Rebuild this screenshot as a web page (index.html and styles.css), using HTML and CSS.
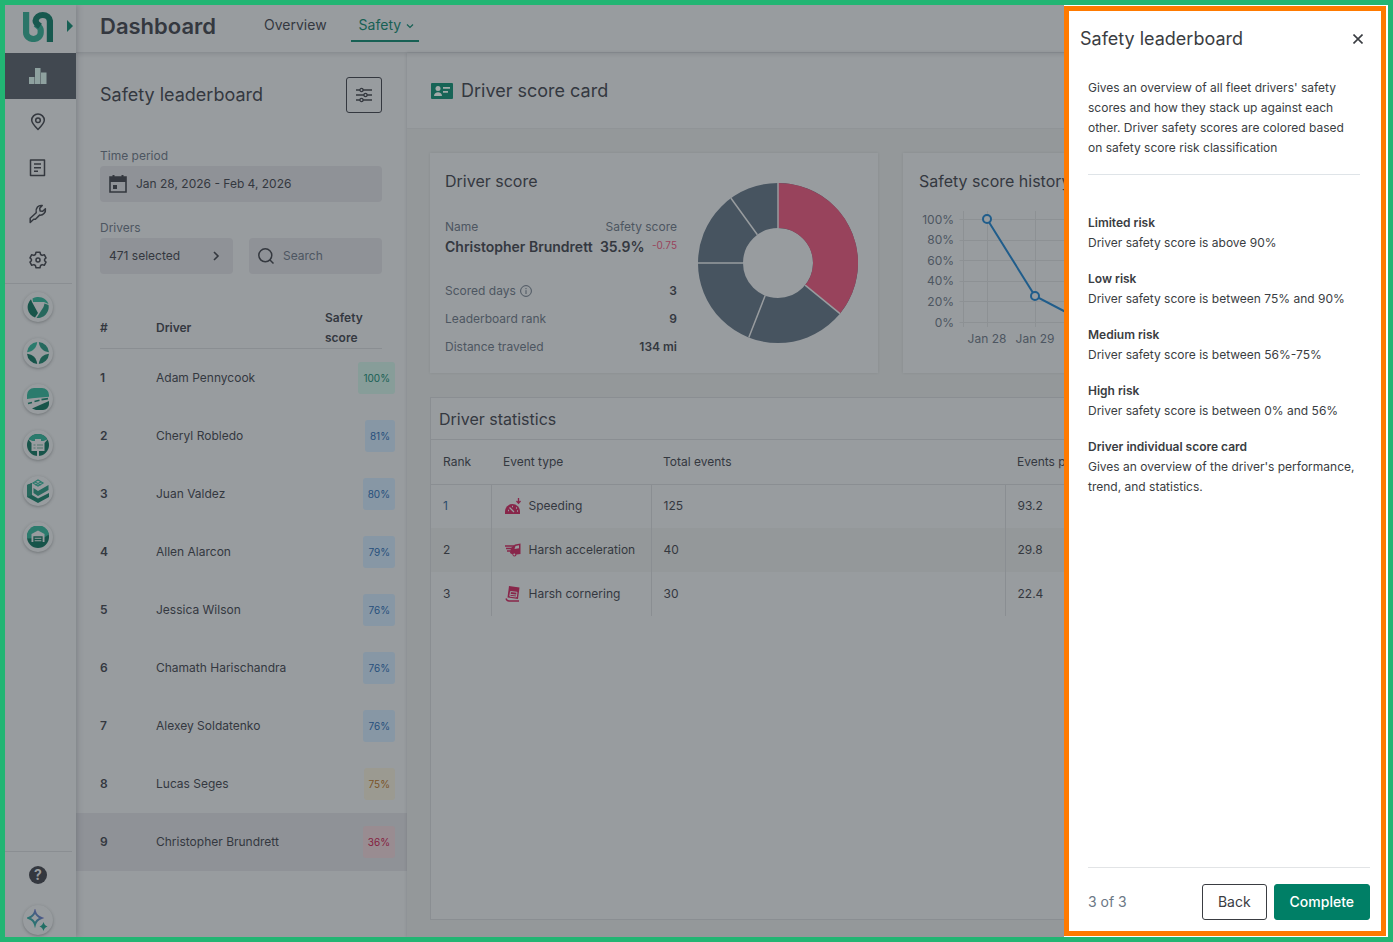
FILE: index.html
```
<!DOCTYPE html>
<html lang="en">

<head>
    <meta charset="UTF-8">
    <meta name="viewport" content="width=device-width, initial-scale=1.0">
    <title>Dashboard - Safety</title>
    <link rel="stylesheet" href="styles.css">
</head>

<body>
    <div class="app">
        <nav class="sidebar" aria-label="Main">
            <div class="brand">
                <svg width="30" height="31" viewBox="0 0 30 31" fill="none" stroke-width="6.200">
                    <path d="M3.100 1v20.500a7.300 6.500 0 0 0 14.600 0V19c0-2.500-2-3.500-5-6" stroke="#2b7568" />
                    <path d="M26.900 31V9.800a7.200 6.600 0 0 0-14.300 0c0 2.500 2.400 4 4.400 5.500" stroke="#17594f" />
                </svg>
                <svg class="brand-arrow" width="6" height="12" viewBox="0 0 6 12"><path d="M0 0l6 6-6 6z" fill="#176054" /></svg>
            </div>
            <a class="nav-item active" href="#" aria-label="Dashboard">
                <svg width="18" height="16" viewBox="0 0 18 16" fill="#8ea19f"><path d="M0 9h5.500v7H0zM6 0h5.500v16H6zM12 4.500h5.500V16H12z" /></svg>
            </a>
            <a class="nav-item" href="#" aria-label="Map">
                <svg width="16" height="18" viewBox="0 0 16 18" class="line"><path d="M8 16.500C4 12.500 1.700 10 1.700 7.300a6.300 6.300 0 0 1 12.600 0c0 2.700-2.300 5.200-6.300 9.200z" /><circle cx="8" cy="7.300" r="2.300" /></svg>
            </a>
            <a class="nav-item" href="#" aria-label="Reports">
                <svg width="18" height="18" viewBox="0 0 18 18" class="line"><path d="M1.500 1h14v15.500h-14zM5 5h7M5 8.700h7M5 12.300h4" /></svg>
            </a>
            <a class="nav-item" href="#" aria-label="Maintenance">
                <svg width="18" height="20" viewBox="0 0 18 20" class="line"><path d="M1.200 18.500v-4.200l6-5.600C6.300 4 9.500.8 13.200 1.500l-2.500 2.800.4 2.600 2.600.4 2.700-2.500c.7 3.700-2.500 6.700-5.800 6.300l-4.200 4.200H4.700z" /></svg>
            </a>
            <a class="nav-item" href="#" aria-label="Settings">
                <svg width="18" height="18" viewBox="0 0 18 18" class="line"><path d="M7 1.200h4l.6 2.300 1.500.9 2.200-.7 1.700 3.200-1.400 1.400v1.500l1.400 1.300-1.700 3.200-2.200-.7-1.500.9-.6 2.300H7l-.6-2.300-1.500-.9-2.200.7L1 11.100l1.400-1.300V8.300L1 6.900l1.700-3.200 2.200.7 1.500-.9z" /><circle cx="9" cy="9" r="2" /></svg>
            </a>
            <div class="app-links">
                <a class="round" href="#" aria-label="Telematics">
                    <svg width="22" height="22" viewBox="0 0 22 22"><path d="M5.500 2.500A11 11 0 0 1 21.500 8L17 6H6z" fill="#2b7b6d" /><path d="M4 3.200A11 11 0 0 0 8 21.500l3-4.500L5 6z" fill="#17544a" /><path d="M17.500 7.500l4 1.500A11 11 0 0 1 9.500 22l7-11z" fill="#26685d" /></svg>
                </a>
                <a class="round" href="#" aria-label="Navigation">
                    <svg width="22" height="22" viewBox="0 0 22 22"><path d="M10.200 0A11 11 0 0 0 0 10.200C6 9.500 9.500 6 10.200 0z" fill="#2b7b6d" /><path d="M11.800 0A11 11 0 0 1 22 10.200C16 9.500 12.500 6 11.800 0z" fill="#26695e" /><path d="M10.200 22A11 11 0 0 1 0 11.800C6 12.500 9.500 16 10.200 22z" fill="#17544a" /><path d="M11.800 22A11 11 0 0 0 22 11.800C16 12.500 12.500 16 11.800 22z" fill="#205e53" /></svg>
                </a>
                <a class="round" href="#" aria-label="Routes">
                    <svg width="22" height="22" viewBox="0 0 22 22"><path d="M0 11V7a7 7 0 0 1 7-7h8a7 7 0 0 1 7 7v1.800C14 9.500 7 10 0 11z" fill="#2b7b6d" /><path d="M1 15.500l4-1M7.500 13.500l5-1.200M14.500 11.600l6.500-1" stroke="#1c5e53" stroke-width="1.600" /><path d="M5 20.500L22 13v3a6 6 0 0 1-6 6H9z" fill="#17544a" /></svg>
                </a>
                <a class="round" href="#" aria-label="Tasks">
                    <svg width="22" height="22" viewBox="0 0 22 22"><circle cx="11" cy="11" r="11" fill="#17544a" /><path d="M1.800 5a11 11 0 0 1 18.400 0l-3 2H5z" fill="#2b7b6d" /><path d="M1 5l4.500 2H8V5h6v2h2.500L21 5l-3.500 4v8H12v5h-2v-5H4.500V9z" fill="#989c9f" /><path d="M6.500 11h2M10 11h6M6.500 14h2M10 14h6" stroke="#50766f" stroke-width="1.200" /></svg>
                </a>
                <a class="round" href="#" aria-label="Inventory">
                    <svg width="22" height="24" viewBox="0 0 22 24"><path d="M0 6l5-2v12l6 3.500L22 14v4l-11 6-11-6z" fill="#1c5c51" /><path d="M0 6l5-2v12l-5 2z" fill="#28685d" /><path d="M6.500 9l4.500 3L21.500 6v5L11 17l-4.500-3z" fill="#27695e" /><path d="M6 4l5-3 5 3-5 3zM8 3l6 3M8 6l6-3" fill="none" stroke="#2b7b6d" stroke-width="1.200" /></svg>
                </a>
                <a class="round" href="#" aria-label="Warehouse">
                    <svg width="22" height="22" viewBox="0 0 22 22"><circle cx="11" cy="11" r="11" fill="#17544a" /><path d="M0 12.500a11 11 0 0 1 22-4l-5.500 3.500z" fill="#2b7b6d" /><path d="M4.500 16V8L11 4.500 17.500 8v8z" fill="#989c9f" /><path d="M7 17v-6h8v6M7 13.500h8M7 16h8" fill="none" stroke="#17544a" stroke-width="1.300" /></svg>
                </a>
            </div>
            <div class="sidebar-bottom">
                <a class="help" href="#" aria-label="Help">?</a>
                <a class="round" href="#" aria-label="Assistant">
                    <svg width="22" height="22" viewBox="0 0 22 22">
                        <defs><linearGradient id="spark" x1="0" y1="1" x2="1" y2="0"><stop offset="0.200" stop-color="#26766f" /><stop offset="1" stop-color="#5a4d91" /></linearGradient></defs>
                        <path d="M8 2.500c1 3.500 2.500 5 6.500 6.500-4 1.500-5.500 3-6.500 6.500C7 12 5.500 10.500 1.500 9 5.500 7.500 7 6 8 2.500z" fill="none" stroke="url(#spark)" stroke-width="2" />
                        <path d="M16.500 13c.7 2.500 1.500 3.300 4 4.500-2.500 1.200-3.300 2-4 4.500-.7-2.500-1.500-3.300-4-4.500 2.500-1.200 3.300-2 4-4.500z" fill="#216f65" />
                    </svg>
                </a>
            </div>
        </nav>

        <div class="page">
            <header class="topbar">
                <h1>Dashboard</h1>
                <a class="tab" href="#">Overview</a>
                <a class="tab selected" href="#">Safety
                    <svg width="8" height="6" viewBox="0 0 8 6" fill="none" stroke="currentColor" stroke-width="1.200"><path d="M1 1.500l3 3 3-3" /></svg>
                </a>
            </header>

            <div class="columns">
                <section class="leaderboard">
                    <div class="filters">
                        <div class="filters-head">
                            <h2>Safety leaderboard</h2>
                            <button class="filter-button" type="button" aria-label="Filters">
                                <svg width="16" height="16" viewBox="0 0 16 16" fill="none" stroke="currentColor" stroke-width="1.300"><path d="M0 3h4M7 3h9M0 8h8M11 8h5M0 13h4M7 13h9" /><circle cx="5.500" cy="3" r="1.600" /><circle cx="9.500" cy="8" r="1.600" /><circle cx="5.500" cy="13" r="1.600" /></svg>
                            </button>
                        </div>
                        <label class="field-label" for="period">Time period</label>
                        <button class="field" id="period" type="button">
                            <svg width="18" height="18" viewBox="0 0 18 18"><path d="M1 2h16v15H1z" fill="none" stroke="currentColor" stroke-width="1.600" /><path d="M1 2h16v5H1zM3.500 0h2v3h-2zM12.500 0h2v3h-2zM4 10h4v4H4z" fill="currentColor" /></svg>
                            <span>Jan 28, 2026 - Feb 4, 2026</span>
                        </button>
                        <label class="field-label drivers-label" for="drivers">Drivers</label>
                        <div class="field-row">
                            <button class="field" id="drivers" type="button">
                                <span>471 selected</span>
                                <svg class="chevron" width="8" height="10" viewBox="0 0 8 10" fill="none" stroke="currentColor" stroke-width="1.600"><path d="M2 1l4 4-4 4" /></svg>
                            </button>
                            <div class="field search">
                                <svg width="16" height="16" viewBox="0 0 16 16" fill="none" stroke="currentColor" stroke-width="1.500"><circle cx="7.300" cy="7.300" r="6.500" /><path d="M12 12l3.500 3.500" /></svg>
                                <input type="text" placeholder="Search" aria-label="Search">
                            </div>
                        </div>
                    </div>
                    <table class="ranking">
                        <thead>
                            <tr><th class="pos">#</th><th>Driver</th><th class="score">Safety score</th></tr>
                        </thead>
                        <tbody>
                            <tr><th class="pos">1</th><td>Adam Pennycook</td><td class="score"><span class="badge green">100%</span></td></tr>
                            <tr><th class="pos">2</th><td>Cheryl Robledo</td><td class="score"><span class="badge blue">81%</span></td></tr>
                            <tr><th class="pos">3</th><td>Juan Valdez</td><td class="score"><span class="badge blue">80%</span></td></tr>
                            <tr><th class="pos">4</th><td>Allen Alarcon</td><td class="score"><span class="badge blue">79%</span></td></tr>
                            <tr><th class="pos">5</th><td>Jessica Wilson</td><td class="score"><span class="badge blue">76%</span></td></tr>
                            <tr><th class="pos">6</th><td>Chamath Harischandra</td><td class="score"><span class="badge blue">76%</span></td></tr>
                            <tr><th class="pos">7</th><td>Alexey Soldatenko</td><td class="score"><span class="badge blue">76%</span></td></tr>
                            <tr><th class="pos">8</th><td>Lucas Seges</td><td class="score"><span class="badge yellow">75%</span></td></tr>
                            <tr class="current"><th class="pos">9</th><td>Christopher Brundrett</td><td class="score"><span class="badge red">36%</span></td></tr>
                        </tbody>
                    </table>
                </section>

                <main class="detail">
                    <div class="detail-head">
                        <svg width="22" height="16" viewBox="0 0 22 16"><rect width="22" height="16" rx="1" fill="#176456" /><circle cx="7" cy="5.500" r="2.500" fill="#a3aaa9" /><path d="M3 13c0-5 8-5 8 0zM12 4h7v1.700h-7zM12 8h5v1.700h-5z" fill="#a3aaa9" /></svg>
                        <h2>Driver score card</h2>
                    </div>
                    <div class="detail-body">
                        <div class="cards">
                            <section class="card score-card">
                                <div class="score-info">
                                    <h3>Driver score</h3>
                                    <div class="pair labels"><span>Name</span><span>Safety score</span></div>
                                    <div class="pair name"><strong>Christopher Brundrett</strong><strong>35.9%</strong><span class="delta">-0.75</span></div>
                                    <div class="pair fact"><span>Scored days
                                        <svg width="12" height="12" viewBox="0 0 12 12" fill="none" stroke="currentColor"><circle cx="6" cy="6" r="5.400" /><path d="M6 5.200V9M6 3v1.200" /></svg></span><strong>3</strong></div>
                                    <div class="pair fact"><span>Leaderboard rank</span><strong>9</strong></div>
                                    <div class="pair fact"><span>Distance traveled</span><strong>134 mi</strong></div>
                                </div>
                                <svg class="donut" width="160" height="160" viewBox="-80 -80 160 160" fill="none">
                                    <circle r="57.500" stroke="#475460" stroke-width="45" />
                                    <path d="M0-57.500A57.500 57.500 0 0 1 44.600 36.300" stroke="#98435c" stroke-width="45" />
                                    <path d="M0-80V-35M62 50.600L27.100 22.100M-29.200 74.500L-12.800 32.600M-80 0H-35M-47-64.700L-20.600-28.300" stroke="#989c9f" stroke-width="1.500" />
                                </svg>
                            </section>
                            <section class="card history">
                                <h3>Safety score history</h3>
                                <svg class="chart" width="420" height="150" viewBox="0 0 420 150">
                                    <path class="grid" d="M40.500 10.500h380M40.500 31.500h380M40.500 51.500h380M40.500 72.500h380M40.500 92.500h380M40.500 113.500h380M44.500 2v116M68.500 2v116M116.500 2v116M164.500 2v116" />
                                    <g text-anchor="end">
                                        <text x="35" y="15">100%</text>
                                        <text x="35" y="35">80%</text>
                                        <text x="35" y="56">60%</text>
                                        <text x="35" y="76">40%</text>
                                        <text x="35" y="97">20%</text>
                                        <text x="35" y="118">0%</text>
                                    </g>
                                    <g text-anchor="middle">
                                        <text x="68" y="134">Jan 28</text>
                                        <text x="116" y="134">Jan 29</text>
                                    </g>
                                    <g fill="#989c9f" stroke="#205d8b" stroke-width="2">
                                        <path d="M68 10l48 77 48 25" fill="none" />
                                        <circle cx="68" cy="10" r="4" />
                                        <circle cx="116" cy="87" r="4" />
                                    </g>
                                </svg>
                            </section>
                        </div>

                        <section class="stats">
                            <h3>Driver statistics</h3>
                            <table>
                                <thead>
                                    <tr><th class="rank">Rank</th><th class="event">Event type</th><th class="total">Total events</th><th>Events per</th></tr>
                                </thead>
                                <tbody>
                                    <tr>
                                        <td class="first">1</td>
                                        <td><div class="event-name">
                                            <svg width="16" height="16" viewBox="0 0 16 16"><path d="M0 16v-2.500a7.500 7.500 0 0 1 15 0V16z" fill="#88264a" /><path d="M13.500 0v5M11.500 3l2 2.200 2-2.200" fill="none" stroke="#88264a" stroke-width="1.300" /><path d="M4.500 9.500L9 14M3 12.500h1M7 8.500h1M11 10h1M12 13h1" stroke="#989c9f" stroke-width="1.300" /></svg>
                                            Speeding</div></td>
                                        <td>125</td><td>93.2</td>
                                    </tr>
                                    <tr>
                                        <td>2</td>
                                        <td><div class="event-name">
                                            <svg width="16" height="16" viewBox="0 0 16 16"><path d="M0 4h9M1 6.500h6M2 9h4" stroke="#88264a" stroke-width="1.300" /><path d="M6 6l4-3.500 5.500-1V12l-4 .5a2 2 0 0 1-4 0L5 11z" fill="#88264a" /><path d="M10.500 4l3.500-.8v3L9.500 7z" fill="#989c9f" /><circle cx="9.300" cy="12.400" r="1" fill="#989c9f" /></svg>
                                            Harsh acceleration</div></td>
                                        <td>40</td><td>29.8</td>
                                    </tr>
                                    <tr>
                                        <td>3</td>
                                        <td><div class="event-name">
                                            <svg width="16" height="16" viewBox="0 0 16 16"><path d="M4 0l10.500 1.500L13 13 2.500 11.500z" fill="#88264a" /><path d="M5.500 5.500l6.500.8-.7 4.700-6.500-.8zM5 8.300l6.500.8" fill="none" stroke="#989c9f" /><path d="M1 12.500c.5 1.500 1.500 2.500 3 2.500H14" fill="none" stroke="#88264a" stroke-width="1.400" /></svg>
                                            Harsh cornering</div></td>
                                        <td>30</td><td>22.4</td>
                                    </tr>
                                </tbody>
                            </table>
                        </section>
                    </div>
                </main>
            </div>
        </div>

        <aside class="drawer">
            <div class="drawer-box">
                <div class="drawer-head">
                    <h2>Safety leaderboard</h2>
                    <button class="close" type="button" aria-label="Close">
                        <svg width="10" height="10" viewBox="0 0 10 10" stroke="currentColor" stroke-width="1.600"><path d="M.5.500l9 9M9.500.500l-9 9" /></svg>
                    </button>
                </div>
                <div class="drawer-content">
                    <p class="intro">Gives an overview of all fleet drivers' safety scores and how they stack up against each other. Driver safety scores are colored based on safety score risk classification</p>
                    <dl>
                        <dt>Limited risk</dt>
                        <dd>Driver safety score is above 90%</dd>
                        <dt>Low risk</dt>
                        <dd>Driver safety score is between 75% and 90%</dd>
                        <dt>Medium risk</dt>
                        <dd>Driver safety score is between 56%-75%</dd>
                        <dt>High risk</dt>
                        <dd>Driver safety score is between 0% and 56%</dd>
                        <dt>Driver individual score card</dt>
                        <dd>Gives an overview of the driver's performance, trend, and statistics.</dd>
                    </dl>
                </div>
                <div class="drawer-foot">
                    <span class="step">3 of 3</span>
                    <button class="back" type="button">Back</button>
                    <button class="complete" type="button">Complete</button>
                </div>
            </div>
        </aside>
    </div>
</body>

</html>
```
FILE: styles.css
```
:root {
    --surface: #989c9f;
    --muted: #94989a;
    --field: #8f9297;
    --line: #8a8e92;
    --text: #34383f;
    --label: #4d5661;
    --green: #176054;
}

* {
    box-sizing: border-box;
}

body {
    margin: 0;
    font-family: Inter, "Liberation Sans", sans-serif;
    font-size: 12px;
    line-height: 20px;
    color: var(--text);
}

h1,
h2,
h3,
p,
dl,
dd {
    margin: 0;
}

h2 {
    font-size: 18px;
    font-weight: 400;
    line-height: 24px;
}

h3 {
    font-size: 16px;
    font-weight: 400;
    line-height: 24px;
}

strong {
    font-weight: 600;
}

button,
input {
    font: inherit;
    color: inherit;
}

a {
    color: inherit;
    text-decoration: none;
}

svg {
    flex: none;
}

table {
    border-collapse: collapse;
    width: 100%;
    table-layout: fixed;
}

th,
td {
    padding: 0;
    text-align: left;
}

.app {
    position: relative;
    display: flex;
    height: 100vh;
    border: 5px solid #22b573;
    background: var(--surface);
    overflow: hidden;
}

/* sidebar */
.sidebar {
    display: flex;
    flex-direction: column;
    width: 71px;
    flex: none;
    z-index: 1;
    background: var(--surface);
    box-shadow: 1px 0 6px rgba(40, 45, 55, 0.25);
}

.brand {
    display: flex;
    align-items: center;
    gap: 14px;
    height: 48px;
    padding: 0 0 6px 18px;
    flex: none;
}

.nav-item {
    display: flex;
    align-items: center;
    justify-content: center;
    height: 46px;
    padding-right: 5px;
}

.nav-item.active {
    background: #414850;
}

.line {
    fill: none;
    stroke: var(--text);
    stroke-width: 1.5;
    stroke-linejoin: round;
}

.app-links {
    display: flex;
    flex-direction: column;
    align-items: center;
    gap: 16px;
    margin-right: 4px;
    padding: 8px 1px 0 0;
    border-top: 1px solid var(--line);
}

.round {
    display: flex;
    align-items: center;
    justify-content: center;
    width: 30px;
    height: 30px;
    border-radius: 50%;
    box-shadow: 0 1px 3px rgba(40, 45, 50, 0.35);
}

.sidebar-bottom {
    display: flex;
    flex-direction: column;
    align-items: center;
    gap: 21px;
    margin: auto 4px 0 0;
    padding: 14px 1px 2px 0;
    border-top: 1px solid var(--line);
}

.help {
    width: 18px;
    height: 18px;
    border-radius: 50%;
    background: var(--text);
    color: var(--surface);
    font-size: 14px;
    font-weight: 700;
    line-height: 18px;
    text-align: center;
}

/* top bar */
.page {
    display: flex;
    flex-direction: column;
    flex: 1;
    min-width: 0;
}

.topbar {
    display: flex;
    height: 48px;
    flex: none;
    padding-left: 24px;
    border-bottom: 1px solid var(--line);
    box-shadow: 0 1px 4px rgba(40, 45, 55, 0.15);
}

.topbar h1 {
    margin-right: 40px;
    font-size: 22px;
    font-weight: 600;
    line-height: 43px;
}

.tab {
    height: 37px;
    margin-right: 16px;
    padding: 0 8px;
    font-size: 14px;
    line-height: 40px;
}

.tab.selected {
    color: var(--green);
    border-bottom: 2px solid var(--green);
}

.tab svg {
    margin: 0 -3px 1px 1px;
}

.columns {
    display: flex;
    flex: 1;
    min-height: 0;
}

/* leaderboard */
.leaderboard {
    width: 331px;
    flex: none;
}

.filters {
    padding: 24px 25px 34px 24px;
}

.filters-head {
    display: flex;
    align-items: center;
    justify-content: space-between;
    margin-bottom: 33px;
}

.filter-button {
    display: flex;
    align-items: center;
    justify-content: center;
    width: 36px;
    height: 36px;
    padding: 0;
    border: 1px solid var(--text);
    border-radius: 3px;
    background: none;
}

.field-label {
    display: block;
    color: var(--label);
}

.drivers-label {
    margin-top: 16px;
}

.field {
    display: flex;
    align-items: center;
    gap: 9px;
    width: 100%;
    height: 36px;
    padding: 0 9px;
    border: 0;
    border-radius: 4px;
    background: var(--field);
    text-align: left;
}

.field-row {
    display: grid;
    grid-template-columns: 1fr 1fr;
    gap: 16px;
}

.chevron {
    margin: 0 4px 0 auto;
}

.search input {
    width: 100%;
    min-width: 0;
    padding: 0;
    border: 0;
    outline: 0;
    background: none;
}

.search input::placeholder {
    color: var(--label);
    opacity: 1;
}

.ranking thead tr {
    height: 41px;
    background: linear-gradient(var(--line), var(--line)) 24px 100% / calc(100% - 49px) 1px no-repeat;
}

.ranking th {
    font-weight: 600;
}

.ranking thead th {
    padding-bottom: 1px;
}

.ranking .pos {
    width: 80px;
    padding-left: 24px;
}

.ranking .score {
    width: 82px;
}

.ranking thead .score {
    padding-right: 40px;
}

.ranking tbody tr {
    height: 58px;
}

.ranking td.score {
    padding-right: 12px;
    text-align: right;
}

.ranking .current {
    background: var(--field);
}

.badge {
    display: inline-block;
    padding: 0 5px;
    border-radius: 3px;
    font-size: 10px;
    line-height: 32px;
}

.badge.green {
    background: #879d99;
    color: #176054;
}

.badge.blue {
    background: #8797a5;
    color: #264f7c;
}

.badge.yellow {
    background: #9b9a91;
    color: #7a5429;
}

.badge.red {
    background: #998c91;
    color: #85213f;
}

/* score card */
.detail {
    display: flex;
    flex-direction: column;
    flex: 1;
    min-width: 0;
    box-shadow: 0 0 3px rgba(40, 45, 55, 0.2);
}

.detail-head {
    display: flex;
    align-items: center;
    gap: 8px;
    height: 76px;
    flex: none;
    padding-left: 24px;
    border-bottom: 1px solid #909497;
}

.detail-body {
    display: flex;
    flex-direction: column;
    gap: 24px;
    flex: 1;
    padding: 24px 37px 17px 23px;
    background: var(--muted);
}

.cards {
    display: grid;
    grid-template-columns: 1fr 1fr;
    gap: 25px;
}

.card {
    height: 220px;
    padding: 16px;
    background: var(--surface);
    box-shadow: 0 0 2px rgba(60, 65, 70, 0.15);
    overflow: hidden;
}

.score-card {
    display: flex;
    justify-content: space-between;
    padding: 16px 20px 16px 15px;
}

.score-info {
    width: 232px;
}

.pair {
    display: flex;
    justify-content: space-between;
}

.labels {
    margin-top: 24px;
    color: var(--label);
}

.name {
    margin-bottom: 24px;
    font-size: 14px;
}

.delta {
    color: #98435c;
    font-size: 10px;
    line-height: 16px;
}

.fact {
    margin-top: 8px;
}

.fact span {
    color: var(--label);
}

.fact svg {
    margin: 0 0 -2px 1px;
}

.donut {
    margin-top: 14px;
}

.chart {
    display: block;
    margin-top: 16px;
}

.chart text {
    fill: var(--label);
    font-size: 12px;
}

.grid {
    stroke: #8d9194;
}

/* statistics */
.stats {
    flex: 1;
    border: 1px solid var(--line);
    background: var(--surface);
}

.stats h3 {
    height: 42px;
    padding-left: 8px;
    line-height: 42px;
    border-bottom: 1px solid var(--line);
}

.stats thead tr {
    height: 44px;
    border-bottom: 1px solid var(--line);
}

.stats th {
    padding-left: 12px;
    font-weight: 400;
}

.stats td {
    height: 44px;
    padding-left: 12px;
}

.stats td + td {
    border-left: 1px solid var(--line);
}

.stats tbody tr:nth-child(even) {
    background: var(--muted);
}

.rank {
    width: 60px;
}

.event {
    width: 160px;
}

.total {
    width: 354px;
}

.first {
    color: #2c4d6b;
}

.event-name {
    display: flex;
    align-items: center;
    gap: 8px;
    padding-left: 1px;
    white-space: nowrap;
}

/* drawer */
.drawer {
    position: absolute;
    top: 0;
    right: 0;
    bottom: 0;
    z-index: 2;
    width: 324px;
    padding: 1px 2px 1px 0;
    background: #fff;
    color: #3a3d42;
}

.drawer-box {
    display: flex;
    flex-direction: column;
    height: 100%;
    padding: 16px 11px 11px;
    border: 5px solid #ff7a00;
}

.drawer-head {
    display: flex;
    align-items: center;
    justify-content: space-between;
}

.close {
    display: flex;
    padding: 7px;
    border: 0;
    background: none;
}

.drawer-content {
    flex: 1;
    padding: 27px 10px 0 8px;
}

.intro {
    margin-bottom: 38px;
    padding-bottom: 16px;
    border-bottom: 1px solid #dfe4e8;
}

dt {
    font-weight: 600;
}

dd {
    margin-bottom: 16px;
}

.drawer-foot {
    display: flex;
    align-items: center;
    gap: 7px;
    margin-left: 8px;
    padding-top: 16px;
    border-top: 1px solid #e2e4e6;
    font-size: 14px;
}

.step {
    margin-right: auto;
    color: #6b7785;
}

.back,
.complete {
    height: 36px;
    padding: 0 15px;
    border: 1px solid #3a3d42;
    border-radius: 3px;
    background: #fff;
}

.complete {
    border-color: #007f66;
    background: #007f66;
    color: #fff;
    font-weight: 500;
}
```
